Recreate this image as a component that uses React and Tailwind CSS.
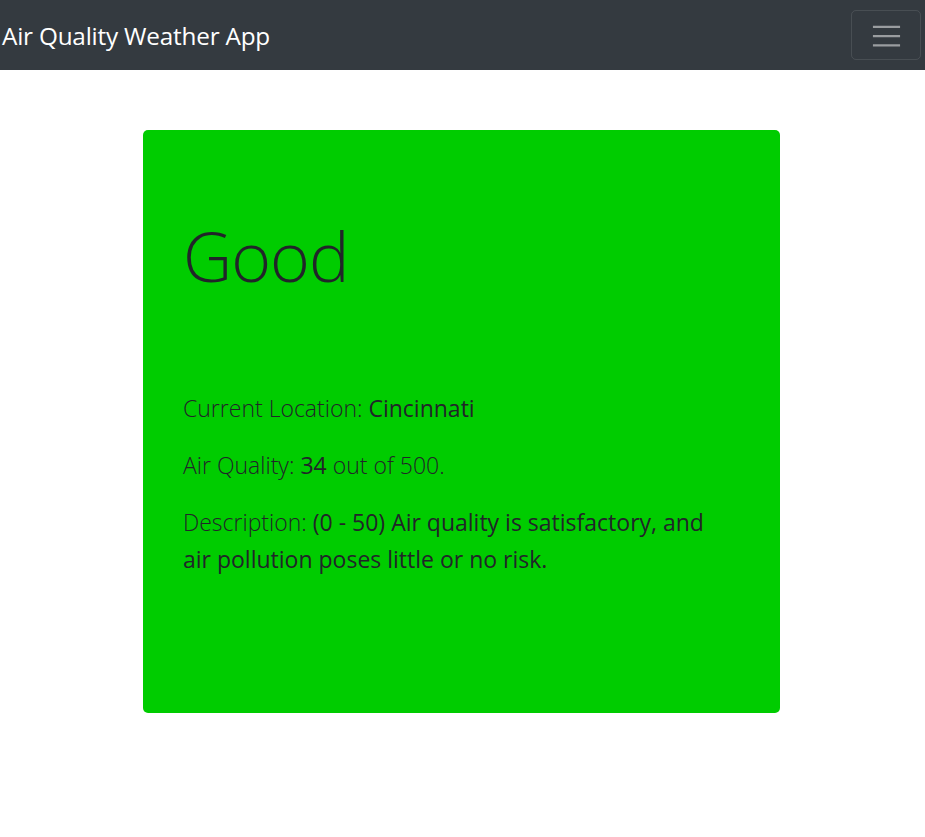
export default function App() {
  const font = { fontFamily: '"Open Sans", "Noto Sans", sans-serif' };
  return (
    <div className="min-h-[837px] bg-white" style={font}>
      <nav className="h-[70px] bg-[#343a40] flex items-center justify-between pl-[2px] pr-[4px]">
        <span className="text-white text-[24.3px] leading-none tracking-[-0.2px] pt-[3px]">Air Quality Weather App</span>
        <button className="w-[70px] h-[50px] border border-[rgba(255,255,255,0.1)] rounded-[5px] flex items-center justify-center">
          <svg width="37" height="37" viewBox="0 0 30 30">
            <path d="M4 8h22M4 15.5h22M4 23h22" stroke="rgba(255,255,255,0.5)" strokeWidth="2" strokeLinecap="butt" />
          </svg>
        </button>
      </nav>
      <div className="w-[637px] ml-[143px] mt-[60px]">
        <div className="bg-[#00cc00] rounded-[5px] h-[583px] pl-[40px] pr-[56px] pt-[84px] text-[#212529]">
          <h1 className="text-[68px] font-light leading-[84px] tracking-[-1px]">Good</h1>
          <div className="mt-[92px] text-[23px] leading-[37px]">
            <p className="mb-[20px]"><span className="font-light">Current Location: </span>Cincinnati</p>
            <p className="mb-[20px]"><span className="font-light">Air Quality: </span>34<span className="font-light"> out of 500.</span></p>
            <p><span className="font-light">Description: </span>(0 - 50) Air quality is satisfactory, and air pollution poses little or no risk.</p>
          </div>
        </div>
      </div>
    </div>
  );
}
